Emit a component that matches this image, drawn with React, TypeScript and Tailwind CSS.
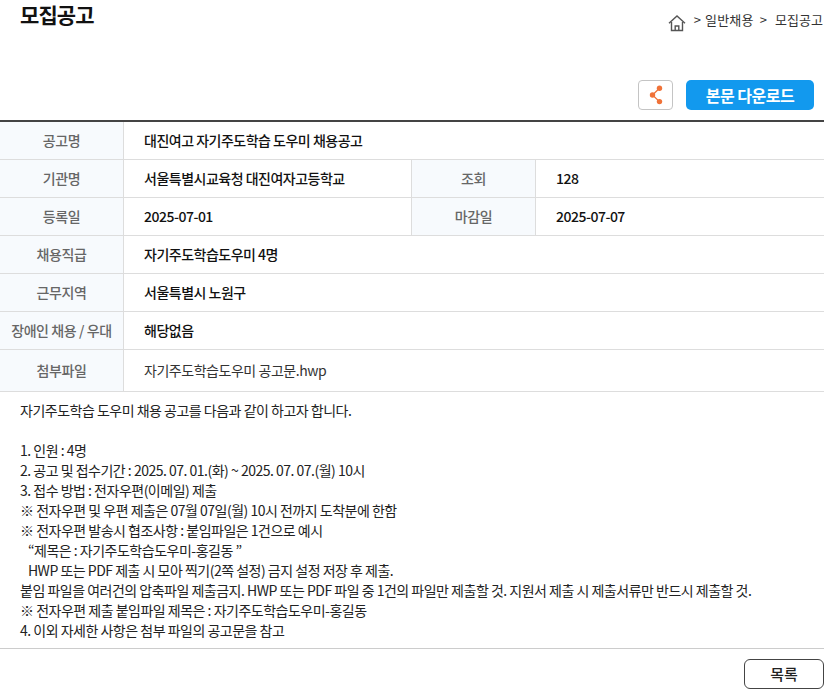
const FONT = "font-['Noto_Sans_CJK_KR','Noto_Sans',sans-serif]";

function Label({ children, className = "" }: { children: React.ReactNode; className?: string }) {
  return (
    <div className={`w-[124px] shrink-0 flex items-center justify-center bg-[#f7fafd] border-r border-[#dddddd] text-[14px] font-medium tracking-[-0.4px] text-[#666666] ${className}`}>
      {children}
    </div>
  );
}

function Value({ children, className = "" }: { children: React.ReactNode; className?: string }) {
  return (
    <div className={`flex items-center pl-5 text-[14px] font-medium tracking-[-0.5px] text-[#111111] ${className}`}>
      {children}
    </div>
  );
}

function Row({ children, h = "h-[38px]" }: { children: React.ReactNode; h?: string }) {
  return <div className={`flex ${h} border-b border-[#dddddd]`}>{children}</div>;
}

const lines = [
  "자기주도학습 도우미 채용 공고를 다음과 같이 하고자 합니다.",
  "\u00a0",
  "1. 인원 : 4명",
  "2. 공고 및 접수기간 : 2025. 07. 01.(화) ~ 2025. 07. 07.(월) 10시",
  "3. 접수 방법 : 전자우편(이메일) 제출",
  "※ 전자우편 및 우편 제출은 07월 07일(월) 10시 전까지 도착분에 한함",
  "※ 전자우편 발송시 협조사항 : 붙임파일은 1건으로 예시",
  "\u00a0\u00a0\u00a0“제목은 : 자기주도학습도우미-홍길동 ”",
  "\u00a0\u00a0\u00a0HWP 또는 PDF 제출 시 모아 찍기(2쪽 설정) 금지 설정 저장 후 제출.",
  "붙임 파일을 여러건의 압축파일 제출금지. HWP 또는 PDF 파일 중 1건의 파일만 제출할 것. 지원서 제출 시 제출서류만 반드시 제출할 것.",
  "※ 전자우편 제출 붙임파일 제목은 : 자기주도학습도우미-홍길동",
  "4. 이외 자세한 사항은 첨부 파일의 공고문을 참고",
];

export default function App() {
  return (
    <div className={`w-[824px] h-[689px] overflow-hidden bg-white ${FONT}`}>
      <div className="flex justify-between h-[80px]">
        <h1 className="pl-5 text-[21px] leading-[28px] font-bold tracking-[-0.9px] text-[#111111]">모집공고</h1>
        <div className="flex items-start pt-[10px] whitespace-nowrap text-[13px] leading-[19px] text-[#333333]">
          <svg width="18" height="18" viewBox="0 0 18 18" fill="none" stroke="#555555" strokeWidth="1.4" className="mt-[4px] mr-[8px]">
            <path d="M1 9.3 9 2l8 7.3" />
            <path d="M3.5 8v8.5h11V8" />
            <path d="M7.2 16.5v-4.5h3.6v4.5" />
          </svg>
          <span>&gt;</span>
          <span className="ml-[4px] tracking-[0.25px]">일반채용</span>
          <span className="ml-[6px]">&gt;</span>
          <span className="ml-[8px] w-[49px] overflow-hidden">모집공고</span>
        </div>
      </div>
      <div className="flex justify-end items-center h-[30px] pr-[10px] gap-[13px]">
        <button className="w-[35px] h-[30px] rounded-[4px] border border-[#c4c4c4] bg-white flex items-center justify-center">
          <svg width="16" height="20" viewBox="0 0 16 20">
            <path d="M11.5 3.2 4.5 10l7 6.6" fill="none" stroke="#f07238" strokeWidth="1.3" />
            <circle cx="11.5" cy="3.2" r="2.7" fill="#f07238" />
            <circle cx="4.5" cy="10" r="2.7" fill="#f07238" />
            <circle cx="11.5" cy="16.6" r="2.7" fill="#f07238" />
          </svg>
        </button>
        <button className="w-[128px] h-[30px] rounded-[5px] bg-[#1299ee] text-white text-[16px] font-bold tracking-[-0.5px]">본문 다운로드</button>
      </div>
      <div className="mt-[10px] border-t-2 border-[#444444]">
        <Row><Label>공고명</Label><Value>대진여고 자기주도학습 도우미 채용공고</Value></Row>
        <Row>
          <Label>기관명</Label>
          <Value className="w-[288px] border-r border-[#dddddd]">서울특별시교육청 대진여자고등학교</Value>
          <Label>조회</Label>
          <Value>128</Value>
        </Row>
        <Row>
          <Label>등록일</Label>
          <Value className="w-[288px] border-r border-[#dddddd]">2025-07-01</Value>
          <Label>마감일</Label>
          <Value>2025-07-07</Value>
        </Row>
        <Row><Label>채용직급</Label><Value>자기주도학습도우미 4명</Value></Row>
        <Row><Label>근무지역</Label><Value>서울특별시 노원구</Value></Row>
        <Row><Label>장애인 채용 / 우대</Label><Value>해당없음</Value></Row>
        <Row h="h-[42px]">
          <Label>첨부파일</Label>
          <div className="flex items-center pl-5 text-[14px] tracking-[-0.46px] text-[#333333]">자기주도학습도우미 공고문.hwp</div>
        </Row>
      </div>
      <div className="pl-5 pt-[8px] pb-[7px] h-[257px] border-b border-[#cccccc] text-[14px] leading-[20px] tracking-[-0.5px] text-[#222222] whitespace-nowrap">
        {lines.map((l, i) => <div key={i}>{l}</div>)}
      </div>
      <div className="flex justify-end pr-0 pt-[10px]">
        <button className="w-[80px] h-[30px] rounded-[6px] border border-[#444444] bg-white text-[15px] font-medium text-[#222222]">목록</button>
      </div>
    </div>
  );
}
